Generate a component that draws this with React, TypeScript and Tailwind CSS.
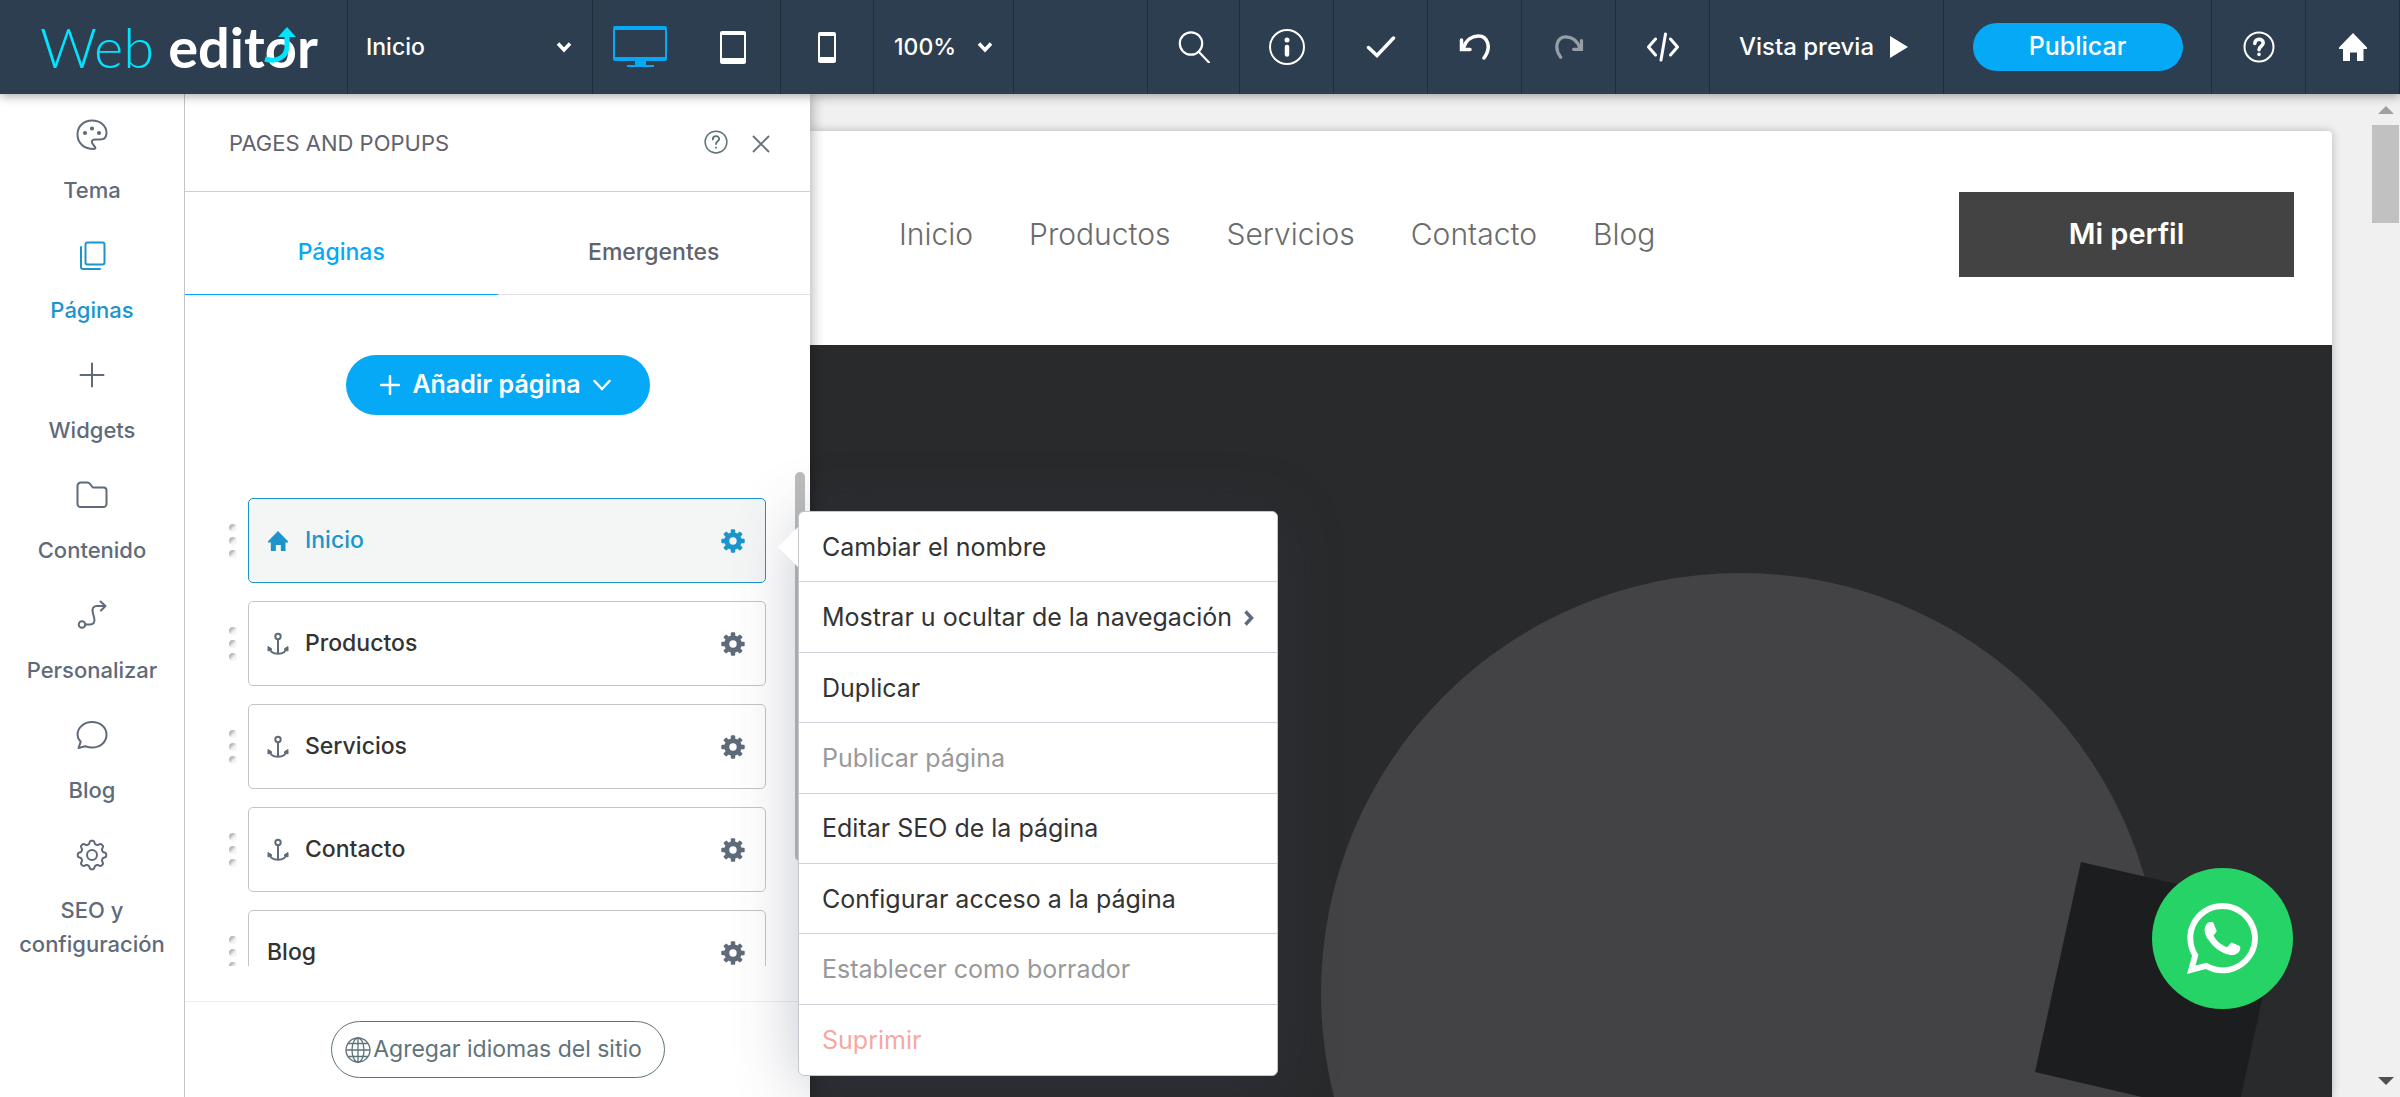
import type { ReactNode } from "react";
import { FaWhatsapp } from "react-icons/fa";

const cogAngles = [0, 45, 90, 135, 180, 225, 270, 315];

// Wavy outline with eight rounded teeth, centred in a 32 x 32 box
const wheelPath =
    Array.from({ length: 96 }, (_, i) => {
        const angle = (i / 96) * Math.PI * 2;
        const radius = 12.7 + 1.6 * Math.tanh(2.2 * Math.cos(angle * 8));
        const x = (16 + radius * Math.cos(angle)).toFixed(2);
        const y = (16 + radius * Math.sin(angle)).toFixed(2);
        return `${i === 0 ? "M" : "L"}${x} ${y}`;
    }).join("") + "Z";

function SideIcon({ children }: { children: ReactNode }) {
    return (
        <svg
            viewBox="0 0 32 32"
            className="h-8 w-8"
            fill="none"
            stroke="currentColor"
            strokeWidth="2"
            strokeLinecap="round"
            strokeLinejoin="round"
            aria-hidden="true"
        >
            {children}
        </svg>
    );
}

function HomeIcon({ className }: { className: string }) {
    return (
        <svg viewBox="0 0 28 28" className={className} fill="currentColor" aria-hidden="true">
            <path d="M14 0 28 14.500V16h-3.500V28H18v-8.500h-7V28H4V16H0v-1.500Z" />
        </svg>
    );
}

function AnchorIcon() {
    return (
        <svg
            viewBox="0 0 22 24"
            className="h-6 w-[22px] text-[#5f6b7a]"
            fill="none"
            stroke="currentColor"
            strokeWidth="2"
            strokeLinejoin="round"
            aria-hidden="true"
        >
            <circle cx="11" cy="4.500" r="2.700" />
            <path d="M11 7.500V22M2.500 15.500c.5 4 4 6.300 8.500 6.300s8-2.300 8.500-6.300" />
            <path d="M1 19v-4.500l4 2.700ZM21 19v-4.500l-4 2.700Z" fill="currentColor" strokeWidth="1" />
        </svg>
    );
}

function CogIcon() {
    return (
        <svg viewBox="0 0 24 24" className="h-6 w-6" aria-hidden="true">
            <circle cx="12" cy="12" r="6.200" fill="none" stroke="currentColor" strokeWidth="5" />
            {cogAngles.map((angle) => (
                <rect
                    key={angle}
                    x="9.800"
                    y="0.300"
                    width="4.400"
                    height="5"
                    rx="1"
                    fill="currentColor"
                    transform={`rotate(${angle} 12 12)`}
                />
            ))}
        </svg>
    );
}

function ChevronDown({ className }: { className: string }) {
    return (
        <svg viewBox="0 0 16 12" className={className} fill="none" stroke="currentColor" strokeWidth="3.500" aria-hidden="true">
            <path d="m2 2.500 6 6.500 6-6.500" />
        </svg>
    );
}

function QuestionIcon({ className, stroke }: { className: string; stroke: number }) {
    return (
        <svg
            viewBox="0 0 32 32"
            className={className}
            fill="none"
            stroke="currentColor"
            strokeWidth={stroke}
            strokeLinecap="round"
            aria-hidden="true"
        >
            <circle cx="16" cy="16" r="14.500" strokeWidth="2" />
            <path d="M11.800 12.500c0-5.800 8.400-5.500 8.400-.5 0 3-4.200 3.200-4.200 6.800" />
            <path d="M16 23.300v.2" />
        </svg>
    );
}

const sideItems = [
    {
        label: "Tema",
        icon: (
            <SideIcon>
                <path d="M18 30C8 30 1.500 24 1.500 15.500 1.500 7 8 1.500 16 1.500S30.500 6.500 30.500 14c0 4.500-3 6.500-6.500 6.500h-5c-3 0-4 2-2.500 4.200 1.800 2.300 4.500 4.800 1.500 5.300Z" />
                <circle cx="9" cy="14" r="1.100" fill="currentColor" />
                <circle cx="16" cy="9.500" r="1.100" fill="currentColor" />
                <circle cx="23" cy="14" r="1.100" fill="currentColor" />
            </SideIcon>
        ),
    },
    {
        label: "Páginas",
        active: true,
        icon: (
            <SideIcon>
                <rect x="9.500" y="3.500" width="19" height="22" rx="2" />
                <path d="M5 8v20a2 2 0 0 0 2 2h17" />
            </SideIcon>
        ),
    },
    {
        label: "Widgets",
        icon: (
            <SideIcon>
                <path d="M16 4.500v23M4.500 16h23" />
            </SideIcon>
        ),
    },
    {
        label: "Contenido",
        icon: (
            <SideIcon>
                <path d="M5 3.500h6.500c1 0 1.700.5 2.300 1.200l3 3.800h10.700a3 3 0 0 1 3 3V25a3 3 0 0 1-3 3h-23a3 3 0 0 1-3-3V7a3.500 3.500 0 0 1 3.500-3.500Z" />
            </SideIcon>
        ),
    },
    {
        label: "Personalizar",
        icon: (
            <SideIcon>
                <circle cx="6" cy="25.500" r="3.300" />
                <path d="M9.500 25.500H14c3.500 0 5-2.500 4.300-6l-1.500-6c-1-4 .5-6.500 4.200-6.500h8M24.500 2.500 29.500 7 25 11.500" />
            </SideIcon>
        ),
    },
    {
        label: "Blog",
        icon: (
            <SideIcon>
                <path d="M2.500 29l2.200-6.200C2.700 20.700 1.500 18.500 1.500 15.700 1.500 8.500 8 3 16 3s14.500 5.200 14.500 12.700S24 28.500 16 28.500c-2.500 0-4.700-.6-6.800-1.300Z" />
            </SideIcon>
        ),
    },
    {
        label: "SEO y configuración",
        icon: (
            <SideIcon>
                <path d={wheelPath} />
                <circle cx="16" cy="16" r="5" />
            </SideIcon>
        ),
    },
];

const pages = [
    { name: "Inicio", kind: "home" },
    { name: "Productos", kind: "anchor" },
    { name: "Servicios", kind: "anchor" },
    { name: "Contacto", kind: "anchor" },
    { name: "Blog", kind: "page" },
];

const menuItems = [
    { label: "Cambiar el nombre", color: "text-[#333333]" },
    { label: "Mostrar u ocultar de la navegación", color: "text-[#333333]", submenu: true },
    { label: "Duplicar", color: "text-[#333333]" },
    { label: "Publicar página", color: "text-[#999999]", disabled: true },
    { label: "Editar SEO de la página", color: "text-[#333333]" },
    { label: "Configurar acceso a la página", color: "text-[#333333]" },
    { label: "Establecer como borrador", color: "text-[#999999]", disabled: true },
    { label: "Suprimir", color: "text-[#f7a8a0]" },
];

const siteLinks = ["Inicio", "Productos", "Servicios", "Contacto", "Blog"];

function ToolButton({ label, className = "w-[94px]", children }: { label: string; className?: string; children: ReactNode }) {
    return (
        <button
            type="button"
            aria-label={label}
            className={`flex h-full shrink-0 items-center justify-center border-r border-[#1e2d3b] ${className}`}
        >
            {children}
        </button>
    );
}

function TopBar() {
    return (
        <header className="relative z-30 flex h-[94px] shrink-0 items-center bg-[#2d3e50] text-2xl font-medium text-white shadow-[0_2px_10px_rgba(0,0,0,0.35)]">
            {/* Logo */}
            <div className="flex h-full w-[348px] shrink-0 items-center border-r border-[#1e2d3b] pl-10">
                <div className="relative flex items-baseline gap-[14px] font-['Lato',sans-serif] text-[56px] leading-none">
                    <span className="font-light text-[#00e5ff]">Web</span>
                    <span className="font-bold">editor</span>
                    <svg viewBox="0 0 36 40" className="absolute top-2 left-[222px] h-10 w-9" fill="none" aria-hidden="true">
                        <path d="M3 32c13 4 22-3 22-13V9" stroke="#00e5ff" strokeWidth="5" />
                        <path d="M16 10 25 0l9 10Z" fill="#00e5ff" />
                    </svg>
                </div>
            </div>

            <div className="relative flex h-full w-[245px] shrink-0 items-center border-r border-[#1e2d3b]">
                <select aria-label="Página" className="h-full w-full appearance-none bg-transparent pl-[18px] text-[23px] font-medium">
                    <option>Inicio</option>
                </select>
                <ChevronDown className="pointer-events-none absolute right-5 h-3 w-4" />
            </div>

            {/* Devices */}
            <div className="flex h-full w-[188px] shrink-0 items-center border-r border-[#1e2d3b]">
                <button type="button" aria-label="Escritorio" className="flex h-full w-[94px] items-center justify-center">
                    <svg viewBox="0 0 54 42" className="h-[42px] w-[54px]" aria-hidden="true">
                        <path
                            fill="#05a9f6"
                            fillRule="evenodd"
                            d="M2 0h50a2 2 0 0 1 2 2v31a2 2 0 0 1-2 2H33v4h8v2H14v-2h8v-4H2a2 2 0 0 1-2-2V2a2 2 0 0 1 2-2Zm0 4v27h50V4Z"
                        />
                    </svg>
                </button>
                <button type="button" aria-label="Tableta" className="flex h-full w-[94px] items-center justify-center">
                    <svg viewBox="0 0 26 33" className="h-[33px] w-[26px]" fill="currentColor" aria-hidden="true">
                        <path fillRule="evenodd" d="M2 0h22a2 2 0 0 1 2 2v29a2 2 0 0 1-2 2H2a2 2 0 0 1-2-2V2a2 2 0 0 1 2-2Zm0 4v23h22V4Z" />
                    </svg>
                </button>
            </div>
            <ToolButton label="Móvil" className="w-[93px]">
                <svg viewBox="0 0 18 31" className="h-[31px] w-[18px]" fill="currentColor" aria-hidden="true">
                    <path fillRule="evenodd" d="M2 0h14a2 2 0 0 1 2 2v27a2 2 0 0 1-2 2H2a2 2 0 0 1-2-2V2a2 2 0 0 1 2-2Zm0 4v21h14V4Z" />
                </svg>
            </ToolButton>

            <div className="relative flex h-full w-[140px] shrink-0 items-center border-r border-[#1e2d3b]">
                <select aria-label="Zoom" className="h-full w-full appearance-none bg-transparent pl-5 text-[23px] font-medium">
                    <option>100%</option>
                </select>
                <ChevronDown className="pointer-events-none absolute right-5 h-3 w-4" />
            </div>

            <div className="h-full flex-1 border-r border-[#1e2d3b]" />

            {/* Tools */}
            <ToolButton label="Buscar" className="w-[92px]">
                <svg viewBox="0 0 32 32" className="h-8 w-8" fill="none" stroke="currentColor" strokeWidth="2.200" strokeLinecap="round" aria-hidden="true">
                    <circle cx="13" cy="12.500" r="11.200" />
                    <path d="m20.500 20.500 10.500 11" />
                </svg>
            </ToolButton>
            <ToolButton label="Información">
                <svg viewBox="0 0 36 36" className="h-9 w-9" fill="none" stroke="currentColor" strokeLinecap="round" aria-hidden="true">
                    <circle cx="18" cy="18" r="17" strokeWidth="2" />
                    <circle cx="18" cy="11" r="2.500" fill="currentColor" stroke="none" />
                    <path d="M18 18v7.500" strokeWidth="4.500" />
                </svg>
            </ToolButton>
            <ToolButton label="Guardar">
                <svg viewBox="0 0 30 22" className="h-[22px] w-[30px]" fill="none" stroke="currentColor" strokeWidth="3.500" strokeLinecap="round" aria-hidden="true">
                    <path d="m2.500 11.500 8.500 8L27.500 2" />
                </svg>
            </ToolButton>
            <ToolButton label="Deshacer">
                <svg viewBox="0 0 32 26" className="h-[26px] w-8" fill="none" stroke="currentColor" strokeWidth="3.500" strokeLinecap="round" aria-hidden="true">
                    <path d="M4 15C7 5 14 2 19.500 2c9 0 13.500 11.500 5.500 22" />
                    <path d="M2.500 6v9.500H11" />
                </svg>
            </ToolButton>
            <ToolButton label="Rehacer">
                <svg viewBox="0 0 32 26" className="h-6 w-[30px] -scale-x-100 opacity-50" fill="none" stroke="currentColor" strokeWidth="3.500" strokeLinecap="round" aria-hidden="true">
                    <path d="M4 15C7 5 14 2 19.500 2c9 0 13.500 11.500 5.500 22" />
                    <path d="M2.500 6v9.500H11" />
                </svg>
            </ToolButton>
            <ToolButton label="Código">
                <svg viewBox="0 0 32 30" className="h-[30px] w-8" fill="none" stroke="currentColor" strokeWidth="3" strokeLinecap="round" strokeLinejoin="round" aria-hidden="true">
                    <path d="m8.500 7-7 8 7 8M23.500 7l7 8-7 8M18.500 2l-4.500 26" />
                </svg>
            </ToolButton>
            <ToolButton label="Vista previa" className="w-[234px] gap-4 pr-1.5">
                <span>Vista previa</span>
                <svg viewBox="0 0 18 22" className="h-[22px] w-[18px]" fill="currentColor" aria-hidden="true">
                    <path d="M0 0v22l18-11Z" />
                </svg>
            </ToolButton>
            <div className="flex h-full w-[268px] shrink-0 items-center justify-center border-r border-[#1e2d3b]">
                <button type="button" className="h-12 w-[210px] rounded-full bg-[#05a9f6] text-[25px]">
                    Publicar
                </button>
            </div>
            <ToolButton label="Ayuda">
                <QuestionIcon className="h-8 w-8" stroke={3.5} />
            </ToolButton>
            <ToolButton label="Panel de control">
                <HomeIcon className="h-7 w-7" />
            </ToolButton>
        </header>
    );
}

function Sidebar() {
    return (
        <nav className="relative z-20 w-[185px] shrink-0 border-r border-[#c4c4c6] bg-white pt-[25px]">
            <ul className="flex flex-col gap-8">
                {sideItems.map((item) => (
                    <li key={item.label}>
                        <a
                            href="#"
                            className={`flex flex-col items-center gap-[22px] px-3 text-center text-[22px] leading-[34px] font-medium ${
                                item.active ? "text-[#1c94cc]" : "text-[#5f6b7a]"
                            }`}
                        >
                            {item.icon}
                            <span>{item.label}</span>
                        </a>
                    </li>
                ))}
            </ul>
        </nav>
    );
}

function DragDots() {
    return (
        <span className="flex w-2 flex-col gap-[5px]" aria-hidden="true">
            <span className="h-2 w-2 rounded-full bg-linear-to-br from-[#b4b7ba] from-25% to-[#f4f6f6] to-60%" />
            <span className="h-2 w-2 rounded-full bg-linear-to-br from-[#b4b7ba] from-25% to-[#f4f6f6] to-60%" />
            <span className="h-2 w-2 rounded-full bg-linear-to-br from-[#b4b7ba] from-25% to-[#f4f6f6] to-60%" />
        </span>
    );
}

function PagesPanel() {
    return (
        <section className="relative z-10 flex w-[625px] shrink-0 flex-col bg-white shadow-[2px_0_12px_rgba(0,0,0,0.3)]">
            <div className="flex h-[98px] shrink-0 items-center border-b border-[#c9d3d6] pt-0.5 pr-10 pl-11">
                <h2 className="flex-1 text-[22px] font-normal text-[#62626c]">PAGES AND POPUPS</h2>
                <button type="button" aria-label="Ayuda" className="mr-6 mb-1 text-[#5f737a]">
                    <QuestionIcon className="h-6 w-6" stroke={2.5} />
                </button>
                <button type="button" aria-label="Cerrar" className="text-[#5f737a]">
                    <svg viewBox="0 0 18 18" className="h-[18px] w-[18px]" stroke="currentColor" strokeWidth="1.800" aria-hidden="true">
                        <path d="m1 1 16 16M17 1 1 17" />
                    </svg>
                </button>
            </div>

            <div role="tablist" className="grid h-[103px] shrink-0 grid-cols-2 text-[23px] font-medium">
                <button type="button" role="tab" aria-selected="true" className="border-b border-[#05a9f6] pt-[18px] text-[#05a9f6]">
                    Páginas
                </button>
                <button type="button" role="tab" aria-selected="false" className="border-b border-[#dfe1e3] pt-[18px] text-[#62626c]">
                    Emergentes
                </button>
            </div>

            <div className="flex justify-center pt-[60px] pb-[57px]">
                <button
                    type="button"
                    className="flex h-[60px] w-[304px] items-center justify-center gap-3 rounded-full bg-[#05a9f6] pr-1 text-[25px] font-semibold text-white"
                >
                    <svg viewBox="0 0 20 20" className="h-5 w-5" stroke="currentColor" strokeWidth="2.500" strokeLinecap="round" aria-hidden="true">
                        <path d="M10 1v18M1 10h18" />
                    </svg>
                    Añadir página
                    <svg viewBox="0 0 18 12" className="h-3 w-[18px]" fill="none" stroke="currentColor" strokeWidth="2.500" strokeLinecap="round" aria-hidden="true">
                        <path d="m1.500 2 7.500 8 7.500-8" />
                    </svg>
                </button>
            </div>

            {/* Page list */}
            <div className="flex min-h-0 flex-1 items-start overflow-hidden">
                <ul className="flex flex-1 flex-col gap-[18px] pt-[26px] pl-11">
                    {pages.map((page) => (
                        <li key={page.name} className="flex items-center gap-[11px]">
                            <DragDots />
                            <div
                                className={`flex h-[85px] flex-1 items-center justify-between rounded-[5px] border pr-5 pl-[18px] ${
                                    page.kind === "home" ? "border-[#1c94cc] bg-[#f4f6f6] text-[#1c94cc]" : "border-[#c4c4c6] text-[#333333]"
                                }`}
                            >
                                <a href="#" className="flex items-center gap-4 text-[23px] font-medium">
                                    {page.kind === "home" && <HomeIcon className="mx-px h-5 w-5" />}
                                    {page.kind === "anchor" && <AnchorIcon />}
                                    {page.name}
                                </a>
                                <button
                                    type="button"
                                    aria-label={`Ajustes de ${page.name}`}
                                    className={page.kind === "home" ? "text-[#1c94cc]" : "text-[#5f6b7a]"}
                                >
                                    <CogIcon />
                                </button>
                            </div>
                        </li>
                    ))}
                </ul>
                <div className="mr-[5px] ml-[29px] h-[389px] w-[10px] rounded-full bg-[#bcbcbc]" />
            </div>

            <div className="mt-[35px] flex h-24 shrink-0 items-start justify-center border-t border-[#eceeee] pt-[19px]">
                <button
                    type="button"
                    className="flex h-[57px] w-[334px] items-center justify-center gap-0.5 rounded-full border border-[#5f737a] pr-2 text-[23px] text-[#5f737a]"
                >
                    <svg viewBox="0 0 26 26" className="h-[26px] w-[26px]" fill="none" stroke="currentColor" strokeWidth="1.300" aria-hidden="true">
                        <circle cx="13" cy="13" r="12" />
                        <ellipse cx="13" cy="13" rx="6" ry="12" />
                        <path d="M13 1v24M1 13h24M3 6.500h20M3 19.500h20" />
                    </svg>
                    Agregar idiomas del sitio
                </button>
            </div>

            <ContextMenu />
        </section>
    );
}

function ContextMenu() {
    return (
        <div className="absolute top-[417px] left-[613px] w-[480px]">
            <ul
                role="menu"
                className="grid h-[565px] grid-rows-8 rounded-[6px] border border-[#c4c8cc] bg-white text-[25px] shadow-[0_8px_64px_rgba(60,66,90,0.3)]"
            >
                {menuItems.map((item) => (
                    <li key={item.label} role="none" className="border-b border-[#cdd3d8] last:border-b-0">
                        <button
                            type="button"
                            role="menuitem"
                            disabled={item.disabled}
                            className={`flex h-full w-full items-center gap-3 pt-0.5 pl-[23px] text-left ${item.color}`}
                        >
                            {item.label}
                            {item.submenu && (
                                <svg viewBox="0 0 10 16" className="h-4 w-[10px] text-[#5f6b7a]" fill="none" stroke="currentColor" strokeWidth="3.500" aria-hidden="true">
                                    <path d="m1.500 1.500 6 6.500-6 6.500" />
                                </svg>
                            )}
                        </button>
                    </li>
                ))}
            </ul>
            {/* Pointer towards the selected page */}
            <svg viewBox="0 0 20 40" className="absolute top-4 -left-5 h-10 w-5" fill="#ffffff" aria-hidden="true">
                <path d="M20 0v40L0 20Z" />
            </svg>
        </div>
    );
}

function SiteCanvas() {
    return (
        <main className="relative flex min-w-0 flex-1 bg-[#f0f0f0]">
            <div className="flex flex-1 flex-col pt-[37px] pr-[39px]">
                <div className="flex flex-1 flex-col rounded-tr-[4px] bg-white shadow-[0_0_8px_rgba(0,0,0,0.25)]">
                    <div className="flex h-[214px] shrink-0 items-center justify-between pr-[38px] pb-2 pl-[89px]">
                        <nav className="flex gap-[56px] text-[30px] font-light text-[#6b6b6b]">
                            {siteLinks.map((link) => (
                                <a key={link} href="#">
                                    {link}
                                </a>
                            ))}
                        </nav>
                        <button type="button" className="h-[85px] w-[335px] bg-[#434343] text-[29px] font-semibold text-white">
                            Mi perfil
                        </button>
                    </div>
                    <div className="relative min-h-0 flex-1 overflow-hidden bg-[#292a2c]">
                        <svg
                            viewBox="0 0 1522 752"
                            preserveAspectRatio="xMaxYMin slice"
                            className="absolute inset-0 h-full w-full"
                            aria-hidden="true"
                        >
                            <circle cx="931" cy="648" r="420" fill="#434345" />
                            <path d="m1271 517 201 46-46 211-201-47Z" fill="#1c1d1e" />
                        </svg>
                    </div>
                </div>
            </div>

            {/* Scrollbar */}
            <div className="flex w-[29px] flex-col items-center pt-3 pb-3">
                <svg viewBox="0 0 16 8" className="h-2 w-4" fill="#a0a0a0" aria-hidden="true">
                    <path d="M8 0 16 8H0Z" />
                </svg>
                <div className="mt-[11px] h-[98px] w-[27px] bg-[#c1c1c1]" />
                <svg viewBox="0 0 16 8" className="mt-auto h-2 w-4" fill="#505050" aria-hidden="true">
                    <path d="M0 0h16L8 8Z" />
                </svg>
            </div>

            <a
                href="#"
                aria-label="WhatsApp"
                className="absolute right-[107px] bottom-[88px] flex h-[141px] w-[141px] items-center justify-center rounded-full bg-[#25d366] text-white"
            >
                <FaWhatsapp className="h-[81px] w-[81px]" />
            </a>
        </main>
    );
}

export default function App() {
    return (
        <div className="flex h-screen flex-col overflow-hidden bg-white font-['Inter',sans-serif]">
            <TopBar />
            <div className="flex min-h-0 flex-1">
                <Sidebar />
                <PagesPanel />
                <SiteCanvas />
            </div>
        </div>
    );
}
